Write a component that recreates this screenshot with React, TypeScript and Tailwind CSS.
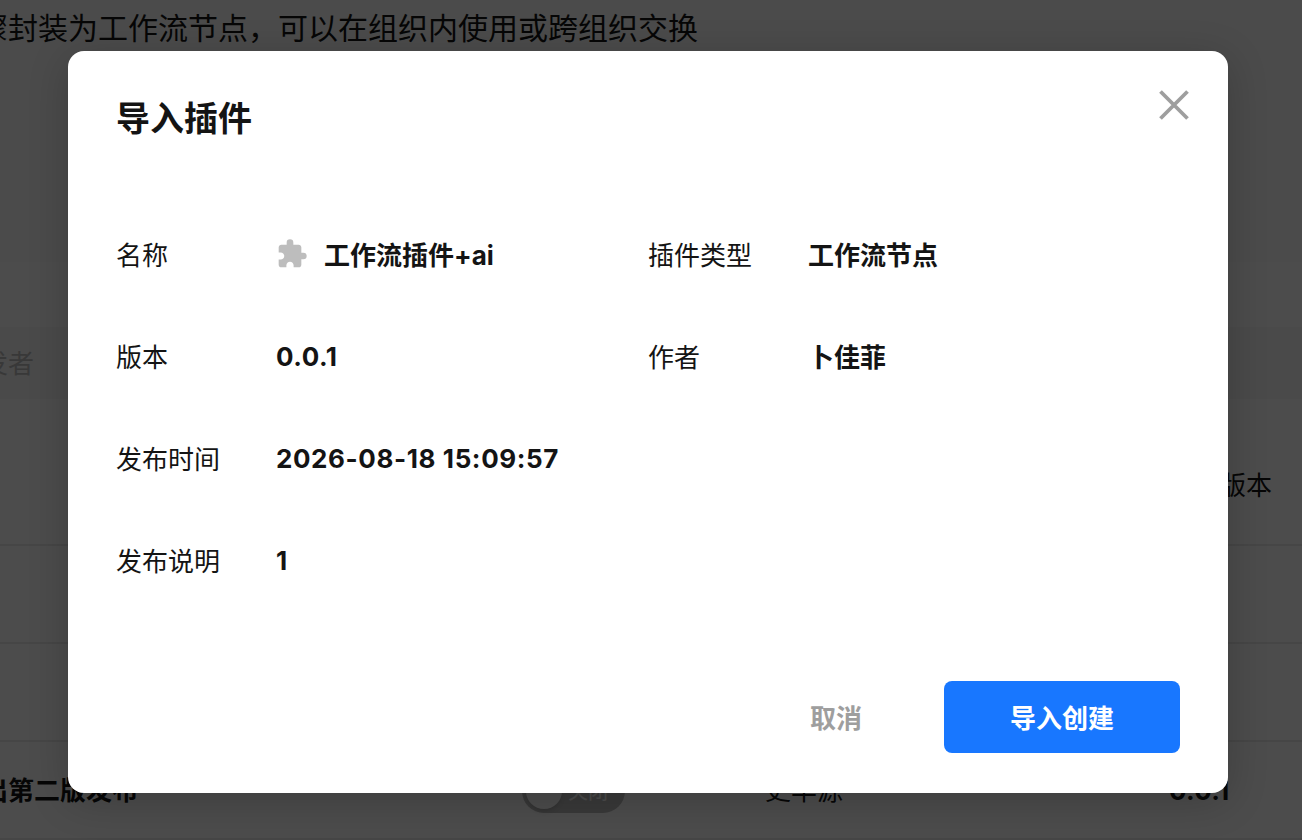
import type { ReactNode } from "react";
import { MdExtension } from "react-icons/md";

function Field({ label, children }: { label: string; children: ReactNode }) {
  return (
    <div className="flex h-[102px] items-center">
      <div className="w-40 shrink-0 text-[#141414]">{label}</div>
      <div className="flex items-center gap-4 font-bold text-[#141414]">{children}</div>
    </div>
  );
}

// plugin list behind the dialog
function PluginPage() {
  return (
    <div className="flex h-full flex-col bg-white text-[26px] text-[#151515]">
      <div className="h-[262px] shrink-0 bg-[#fafafa] pt-[6px]">
        <p className="-ml-[22px] whitespace-nowrap text-[30px] leading-[44px]">
          骤封装为工作流节点，可以在组织内使用或跨组织交换
        </p>
      </div>
      <div className="mt-[65px] flex h-[72px] shrink-0 items-center bg-[#f7f7f7] pt-px">
        <span className="-ml-[18px] text-[#bdbdbd]">发者</span>
      </div>
      <div className="flex h-[147px] shrink-0 items-center justify-end border-b-2 border-[#eaeaea] pt-[27px] pr-[30px]">
        版本
      </div>
      <div className="h-[98px] shrink-0 border-b-2 border-[#eaeaea]" />
      <div className="h-[98px] shrink-0 border-b-2 border-[#eaeaea]" />
      <div className="flex h-[98px] shrink-0 items-center border-b-2 border-[#eaeaea] pt-px">
        <div className="-ml-[18px] w-[540px] font-bold">出第二版发布</div>
        <div className="flex h-11 w-[103px] items-center rounded-full bg-[#bfbfbf] pl-1">
          <span className="h-9 w-9 rounded-full bg-white shadow-md" />
          <span className="ml-1.5 pt-0.5 text-[20px] text-white">关闭</span>
        </div>
        <div className="ml-[140px] w-[404px]">史华源</div>
        <div className="font-bold tracking-[0.3px]">0.0.1</div>
      </div>
    </div>
  );
}

function ImportDialog() {
  return (
    <div
      role="dialog"
      className="flex h-[742px] w-[1160px] flex-col rounded-2xl bg-white px-12 text-[26px] leading-[38px] shadow-[0_8px_40px_rgba(0,0,0,0.2)]"
    >
      <div className="flex h-[154px] shrink-0 justify-between pt-[43px]">
        <h1 className="text-[34px] leading-[50px] font-bold text-[#141414]">导入插件</h1>
        <button className="-mt-[4.5px] -mr-[9px] h-[30px] w-[30px]">
          <svg viewBox="0 0 30 30" fill="none" stroke="#9e9e9e" strokeWidth="3.8">
            <path d="M1.5 1.5 28.5 28.5M28.5 1.5 1.5 28.5" />
          </svg>
        </button>
      </div>

      <div className="grid grid-cols-2">
        <Field label="名称">
          <MdExtension size={32} color="#bdbdbd" className="mb-1" />
          <span>工作流插件+ai</span>
        </Field>
        <Field label="插件类型">工作流节点</Field>
        <Field label="版本">
          <span className="pb-0.5 tracking-[0.5px]">0.0.1</span>
        </Field>
        <Field label="作者">卜佳菲</Field>
        <div className="col-span-2">
          <Field label="发布时间">
            <span className="pb-0.5 tracking-[0.6px]">2026-08-18 15:09:57</span>
          </Field>
          <Field label="发布说明">
            <span className="pb-0.5">1</span>
          </Field>
        </div>
      </div>

      <div className="mt-auto mb-10 flex h-[72px] justify-end">
        <button className="w-[216px] pt-[3px] font-bold text-[#9e9e9e]">取消</button>
        <button className="w-[236px] rounded-lg bg-[#1877ff] pt-[3px] font-bold text-white">导入创建</button>
      </div>
    </div>
  );
}

export default function App() {
  return (
    <div className="relative h-[840px] w-[1302px] overflow-hidden font-[Inter,'Noto_Sans_CJK_SC',sans-serif]">
      <PluginPage />
      <div className="absolute inset-0 bg-black/70 pt-[51px] pl-[68px]">
        <ImportDialog />
      </div>
    </div>
  );
}
